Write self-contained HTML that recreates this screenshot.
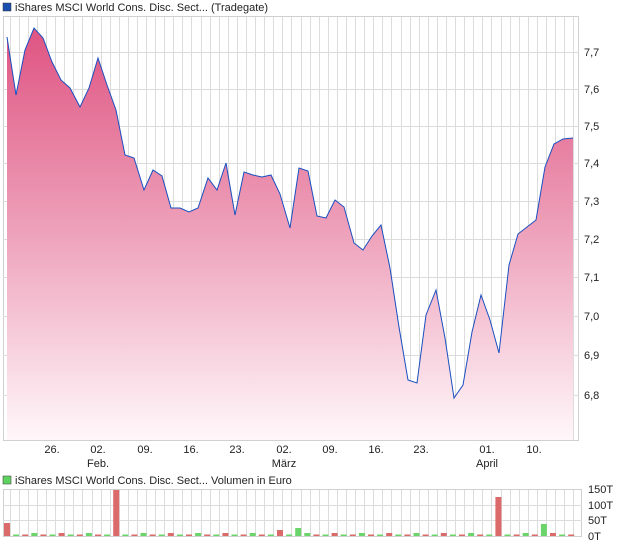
<!DOCTYPE html>
<html><head><meta charset="utf-8"><style>
body{margin:0;background:#fff;width:620px;height:546px;overflow:hidden;font-family:"Liberation Sans",sans-serif;}
svg text{font-family:"Liberation Sans",sans-serif;font-size:11px;fill:#222;}
</style></head><body>
<svg width="620" height="546" xmlns="http://www.w3.org/2000/svg">
<defs>
<linearGradient id="g" x1="0" y1="0" x2="0" y2="1">
<stop offset="0" stop-color="#df5482"/>
<stop offset="0.5" stop-color="#eea2bb"/>
<stop offset="1" stop-color="#fff7fa"/>
</linearGradient>
</defs>
<rect x="3" y="3" width="8" height="8" fill="#1a4fb0" stroke="#333" stroke-width="0.5"/>
<text x="15" y="11">iShares MSCI World Cons. Disc. Sect... (Tradegate)</text>
<g id="vg" stroke="#dcdcdc" stroke-width="1"></g>
<rect x="3.5" y="16.5" width="575" height="424" fill="none" stroke="#d0d0d0"/>
<g stroke="#dcdcdc">
<line x1="3" x2="578" y1="52.5" y2="52.5"/><line x1="3" x2="578" y1="89.5" y2="89.5"/><line x1="3" x2="578" y1="126.5" y2="126.5"/><line x1="3" x2="578" y1="163.5" y2="163.5"/><line x1="3" x2="578" y1="201.5" y2="201.5"/><line x1="3" x2="578" y1="239.5" y2="239.5"/><line x1="3" x2="578" y1="277.5" y2="277.5"/><line x1="3" x2="578" y1="316.5" y2="316.5"/><line x1="3" x2="578" y1="355.5" y2="355.5"/><line x1="3" x2="578" y1="395.5" y2="395.5"/>
</g>
<path id="area" fill="url(#g)" d=""/>
<path id="line" fill="none" stroke="#1a4fc0" stroke-width="1" d=""/>
<g>
<text x="584" y="56">7,7</text><text x="584" y="93">7,6</text><text x="584" y="130">7,5</text><text x="584" y="167">7,4</text><text x="584" y="205">7,3</text><text x="584" y="243">7,2</text><text x="584" y="281">7,1</text><text x="584" y="320">7,0</text><text x="584" y="359">6,9</text><text x="584" y="399">6,8</text>
</g>
<g text-anchor="middle">
<text x="52" y="453">26.</text><text x="98" y="453">02.</text><text x="145" y="453">09.</text><text x="191" y="453">16.</text><text x="237" y="453">23.</text><text x="284" y="453">02.</text><text x="330" y="453">09.</text><text x="376" y="453">16.</text><text x="421" y="453">23.</text><text x="487" y="453">01.</text><text x="534" y="453">10.</text>
<text x="98" y="467">Feb.</text><text x="284" y="467">März</text><text x="487" y="467">April</text>
</g>
<rect x="3" y="476" width="8" height="8" fill="#5fd35f" stroke="#333" stroke-width="0.5"/>
<text x="15" y="484">iShares MSCI World Cons. Disc. Sect... Volumen in Euro</text>
<g id="vg2" stroke="#dcdcdc"></g>
<rect x="3.5" y="489.5" width="578" height="47" fill="none" stroke="#d0d0d0"/>
<g stroke="#dcdcdc"><line x1="3" x2="582" y1="505.5" y2="505.5"/><line x1="3" x2="582" y1="520.5" y2="520.5"/></g>
<g id="bars"></g>
<text x="588" y="493">150T</text><text x="588" y="509">100T</text><text x="588" y="524">50T</text><text x="588" y="540">0T</text>
</svg>
<script>
var p=[[7,37],[16,95],[25,50],[34,28],[43,38],[52,62],[61,80],[70,88],[80,107],[89,88],[98,58],[107,85],[116,110],[125,155],[134,158],[144,190],[153,170],[162,176],[171,208],[180,208],[189,212],[198,208],[208,178],[217,190],[226,163],[235,215],[244,172],[253,175],[262,177],[271,175],[280,194],[290,228],[299,168],[308,171],[317,216],[326,218],[335,200],[344,207],[354,243],[363,250],[372,236],[381,225],[390,268],[399,327],[408,380],[417,383],[426,315],[436,290],[445,338],[454,398],[463,385],[472,332],[481,295],[490,320],[499,353],[509,265],[518,234],[527,227],[536,220],[545,167],[554,144],[563,139],[573,138]];
var d="M"+p.map(function(a){return a.join(",")}).join(" L");
document.getElementById("line").setAttribute("d",d);
document.getElementById("area").setAttribute("d",d+" L573,440 L7,440 Z");
var ns="http://www.w3.org/2000/svg",vg=document.getElementById("vg"),vg2=document.getElementById("vg2");
for(var k=1;k<64;k++){var x=Math.round(0.6+9.09*k)+0.5;if(x>578)break;
var l=document.createElementNS(ns,"line");l.setAttribute("x1",x);l.setAttribute("x2",x);l.setAttribute("y1",17);l.setAttribute("y2",440);vg.appendChild(l);
var l2=document.createElementNS(ns,"line");l2.setAttribute("x1",x);l2.setAttribute("x2",x);l2.setAttribute("y1",490);l2.setAttribute("y2",536);vg2.appendChild(l2);}
var h={0:[13,"r"],12:[46,"r"],30:[6,"r"],32:[8,"g"],54:[39,"r"],59:[12,"g"]};
var b=document.getElementById("bars");
for(var i=0;i<63;i++){var x=4+i*9.1;var v=h[i]||[ (i%3==0?3:1.5), (i%2?"g":"r")];
var r=document.createElementNS(ns,"rect");r.setAttribute("x",x);r.setAttribute("width",6);r.setAttribute("y",536-v[0]);r.setAttribute("height",v[0]);r.setAttribute("fill",v[1]=="r"?"#db6a6a":"#6bd56b");b.appendChild(r);}
</script>
</body></html>
